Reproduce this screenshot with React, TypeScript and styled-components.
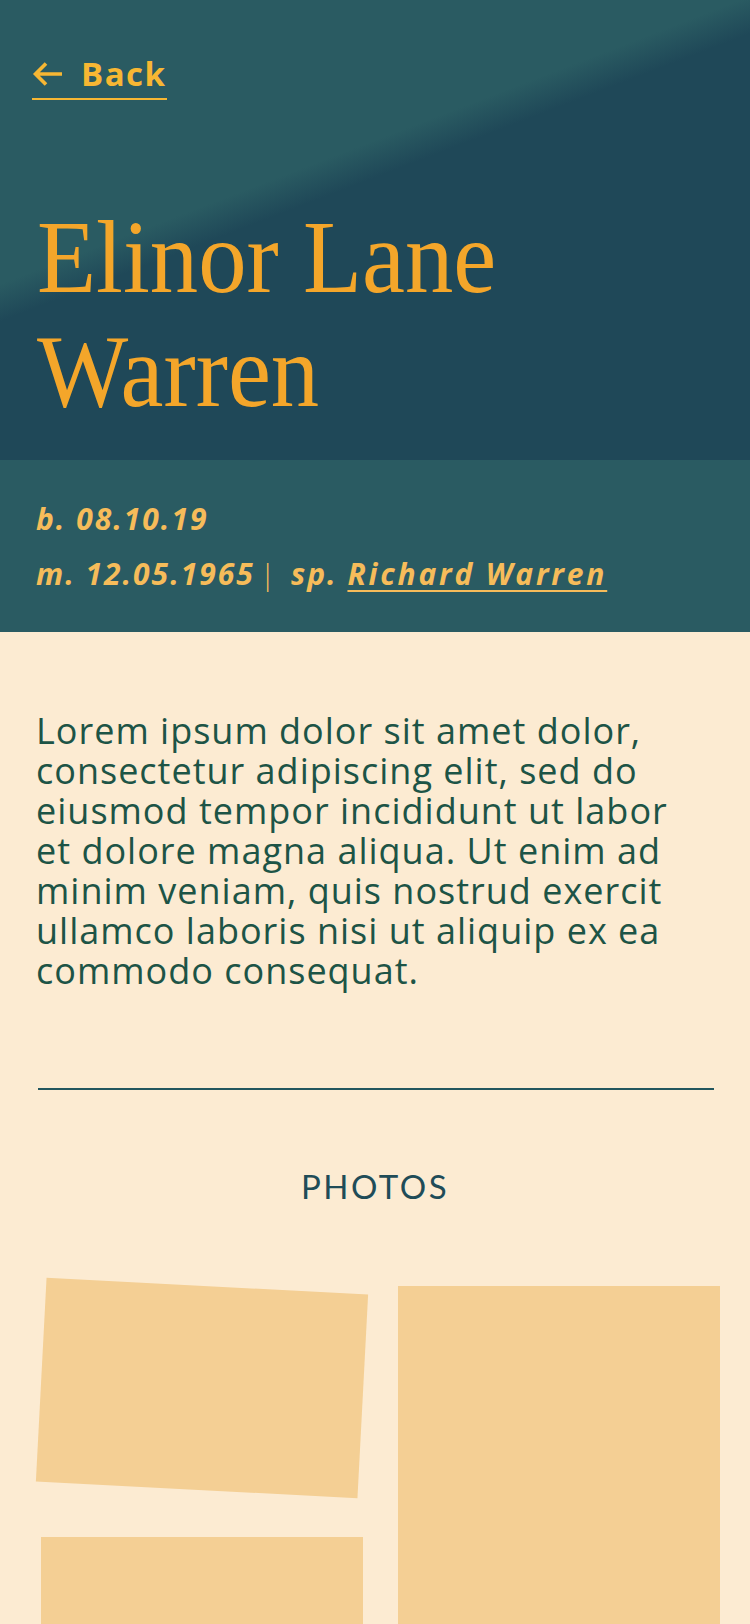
import styled, { createGlobalStyle } from "styled-components";

const GlobalStyle = createGlobalStyle`
  body {
    margin: 0;
    background-color: #fcebd2;
    font-family: "Open Sans", Lato, sans-serif;
  }
`;

const Page = styled.div`
  width: 750px;
  min-height: 1624px;
  background-color: #fcebd2;
  overflow: hidden;
`;

const Hero = styled.header`
  padding: 57px 36px 32px 32px;
  background: linear-gradient(
    159deg,
    #2a5b62 0%,
    #2a5b62 38%,
    #1f4858 43%,
    #1f4858 100%
  );
`;

const BackLink = styled.a`
  display: inline-flex;
  align-items: center;
  gap: 18px;
  padding: 0 0 8px 0;
  border-bottom: 2px solid #f7b733;
  color: #f7b733;
  font-family: "Open Sans", sans-serif;
  font-weight: 700;
  font-size: 33px;
  line-height: 33px;
  letter-spacing: 1.5px;
  text-decoration: none;
  cursor: pointer;
`;

const Name = styled.h1`
  margin: 100px 0 0 5px;
  width: 760px;
  color: #f4a62a;
  font-family: "Liberation Serif", serif;
  font-weight: 400;
  font-size: 104px;
  line-height: 114px;
  transform: scaleX(0.93);
  transform-origin: left top;
`;

const Meta = styled.section`
  padding: 31px 36px;
  background-color: #2a5b62;
  color: #f6bc5a;
  font-family: "Open Sans", sans-serif;
  font-weight: 700;
  font-style: italic;
  font-size: 30px;
  line-height: 55px;
  letter-spacing: 2px;
`;

const MetaLine = styled.div`
  white-space: nowrap;
`;

const Bar = styled.span`
  font-weight: 300;
  margin: 0 14px 0 4px;
`;

const Spouse = styled.a`
  color: inherit;
  letter-spacing: 2.8px;
  text-decoration: underline;
  text-decoration-thickness: 2px;
  text-underline-offset: 5px;
  cursor: pointer;
`;

const Content = styled.main`
  padding: 79px 36px 0 36px;
`;

const Bio = styled.p`
  margin: 0;
  padding-right: 13px;
  color: #1d5446;
  font-family: "Open Sans", sans-serif;
  font-size: 36px;
  line-height: 40px;
  letter-spacing: 1px;
`;

const Rule = styled.hr`
  margin: 97px 0 0 2px;
  border: none;
  border-top: 2px solid #22565e;
`;

const SectionTitle = styled.h2`
  margin: 80px 0 0 0;
  text-align: center;
  color: #1f4c58;
  font-family: Lato, sans-serif;
  font-weight: 400;
  font-size: 33px;
  line-height: 33px;
  letter-spacing: 2.5px;
`;

const Gallery = styled.div`
  display: grid;
  grid-template-columns: 322px 322px;
  column-gap: 35px;
  align-items: start;
  margin: 83px 0 0 5px;
`;

const Stack = styled.div`
  display: flex;
  flex-direction: column;
  gap: 47px;
`;

const Photo = styled.div<{ $height: number; $tilt?: number }>`
  height: ${(p) => p.$height}px;
  background-color: #f4cf94;
  transform: rotate(${(p) => p.$tilt ?? 0}deg);
`;

function ArrowLeft() {
  return (
    <svg width="31" height="26" viewBox="0 0 31 26" fill="none">
      <path
        d="M30 13H4M14 2.5L3.5 13 14 23.5"
        stroke="#f7b733"
        strokeWidth="3.6"
        strokeLinejoin="miter"
      />
    </svg>
  );
}

export default function App() {
  return (
    <>
      <GlobalStyle />
      <Page>
        <Hero>
          <BackLink>
            <ArrowLeft />
            Back
          </BackLink>
          <Name>
            Elinor Lane
            <br />
            Warren
          </Name>
        </Hero>
        <Meta>
          <MetaLine>b. 08.10.19</MetaLine>
          <MetaLine>
            m. 12.05.1965<Bar>|</Bar>sp. <Spouse>Richard Warren</Spouse>
          </MetaLine>
        </Meta>
        <Content>
          <Bio>
            Lorem ipsum dolor sit amet dolor, consectetur adipiscing elit, sed
            do eiusmod tempor incididunt ut labor et dolore magna aliqua. Ut
            enim ad minim veniam, quis nostrud exercit ullamco laboris nisi ut
            aliquip ex ea commodo consequat.
          </Bio>
          <Rule />
          <SectionTitle>PHOTOS</SectionTitle>
          <Gallery>
            <Stack>
              <Photo $height={204} $tilt={3} />
              <Photo $height={320} />
            </Stack>
            <Photo $height={560} />
          </Gallery>
        </Content>
      </Page>
    </>
  );
}
